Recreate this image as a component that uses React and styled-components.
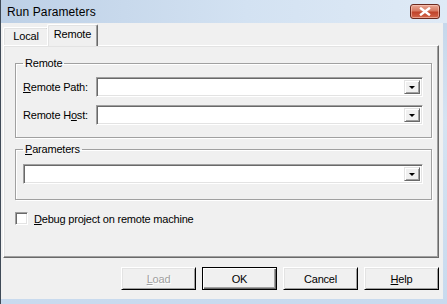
import React from 'react';
import styled, { createGlobalStyle } from 'styled-components';

const GlobalStyle = createGlobalStyle`
  html, body {
    margin: 0;
    padding: 0;
    background: #c9dbee;
  }
  body {
    font-family: "Liberation Sans", Arial, sans-serif;
    font-size: 11px;
    letter-spacing: -0.2px;
    color: #000;
  }
`;

const Window = styled.div`
  width: 447px;
  height: 304px;
  box-sizing: border-box;
  display: flex;
  flex-direction: column;
  border-left: 1px solid #3f4a57;
  background: linear-gradient(180deg, #c3d5ea 0%, #d5e3f2 40%, #c8daee 100%);
`;

const TitleBar = styled.div`
  height: 23px;
  flex: none;
  display: flex;
  align-items: center;
  justify-content: space-between;
  padding: 0 6px 0 6px;
  background: linear-gradient(90deg, #bdd0e6 0%, #d3e2f2 55%, #dfeaf6 100%);
`;

const Title = styled.span`
  font-size: 12px;
  letter-spacing: 0.1px;
  color: #000;
`;

const CloseButton = styled.div`
  width: 30px;
  height: 15px;
  margin-top: -1px;
  margin-right: 1px;
  box-sizing: border-box;
  border: 1px solid #6b2a1e;
  border-radius: 3px;
  display: flex;
  align-items: center;
  justify-content: center;
  background: linear-gradient(180deg, #e9a794 0%, #d77a62 45%, #c0432a 55%, #d3684c 100%);
  box-shadow: inset 0 0 0 1px rgba(255, 210, 195, 0.55);
`;

const Body = styled.div`
  flex: 1;
  display: flex;
  flex-direction: column;
  background: #f0f0f0;
  margin: 0 4px 5px 0;
  padding: 1px 0 0 2px;
`;

const TabRow = styled.div`
  height: 21px;
  display: flex;
  align-items: flex-start;
  flex: none;
`;

const Tab = styled.div`
  position: relative;
  box-sizing: border-box;
  display: flex;
  align-items: center;
  justify-content: center;
  background: #f0f0f0;
  border-top: 1px solid #fff;
  border-left: 1px solid #fff;
  border-right: 1px solid #696969;
  box-shadow: inset -1px 0 0 #a0a0a0, inset 1px 1px 0 #e3e3e3;
  border-radius: 2px 2px 0 0;
  margin-top: ${p => (p.$selected ? '0' : '3px')};
  height: ${p => (p.$selected ? '22px' : '18px')};
  width: ${p => p.$width};
  padding-bottom: ${p => (p.$selected ? '3px' : '1px')};
  margin-left: ${p => (p.$selected ? '-2px' : '0')};
  z-index: ${p => (p.$selected ? 1 : 0)};
`;

const Panel = styled.div`
  flex: 1;
  box-sizing: border-box;
  display: flex;
  flex-direction: column;
  width: 436px;
  border: 1px solid;
  border-color: #fff #696969 #696969 #fff;
  box-shadow: inset -1px -1px 0 #a0a0a0, inset 1px 1px 0 #e3e3e3;
  padding: 0 6px 0 11px;
`;

const Group = styled.fieldset`
  margin: ${p => p.$top} 0 0 0;
  padding: ${p => p.$pad};
  border: 1px solid #a0a0a0;
  box-shadow: inset 1px 1px 0 #fff, 1px 1px 0 #fff;
  min-width: 0;
`;

const Legend = styled.legend`
  padding: 0 2px;
  line-height: 13px;
  font-size: 11px;
`;

const FieldGrid = styled.div`
  display: grid;
  grid-template-columns: 73px 1fr;
  row-gap: 8px;
  align-items: center;
`;

const Label = styled.span`
  white-space: nowrap;
`;

const Combo = styled.div`
  height: 20px;
  box-sizing: border-box;
  display: flex;
  justify-content: flex-end;
  padding: 2px;
  background: #fff;
  border: 1px solid;
  border-color: #a0a0a0 #fff #fff #a0a0a0;
  box-shadow: inset 1px 1px 0 #696969, inset -1px -1px 0 #e3e3e3;
`;

const DropButton = styled.div`
  width: 16px;
  box-sizing: border-box;
  display: flex;
  align-items: center;
  justify-content: center;
  background: #f0f0f0;
  border: 1px solid;
  border-color: #e3e3e3 #696969 #696969 #e3e3e3;
  box-shadow: inset 1px 1px 0 #fff, inset -1px -1px 0 #a0a0a0;
`;

const Arrow = styled.div`
  width: 0;
  height: 0;
  border-left: 3px solid transparent;
  border-right: 3px solid transparent;
  border-top: 3px solid #000;
  margin-top: 1px;
`;

const CheckRow = styled.label`
  display: flex;
  align-items: center;
  gap: 6px;
  margin-top: 12px;
`;

const CheckBox = styled.span`
  width: 13px;
  height: 13px;
  box-sizing: border-box;
  background: #fff;
  border: 1px solid;
  border-color: #a0a0a0 #fff #fff #a0a0a0;
  box-shadow: inset 1px 1px 0 #696969, inset -1px -1px 0 #e3e3e3;
`;

const ButtonRow = styled.div`
  flex: none;
  display: flex;
  justify-content: flex-end;
  gap: 6px;
  margin: 9px 4px 9px 0;
`;

const Button = styled.button`
  width: 75px;
  height: 23px;
  box-sizing: border-box;
  padding: 0;
  font-family: "Liberation Sans", Arial, sans-serif;
  font-size: 11px;
  letter-spacing: -0.2px;
  background: #f0f0f0;
  color: ${p => (p.disabled ? '#a0a0a0' : '#000')};
  text-shadow: ${p => (p.disabled ? '1px 1px 0 #fff' : 'none')};
  border: 1px solid;
  border-color: ${p => (p.$default ? '#000' : '#fff #000 #000 #fff')};
  box-shadow: ${p =>
    p.$default
      ? 'inset 1px 1px 0 #fff, inset -1px -1px 0 #696969, inset -2px -2px 0 #a0a0a0'
      : 'inset 1px 1px 0 #e3e3e3, inset -1px -1px 0 #a0a0a0'};
`;

const Combobox = () => (
  <Combo>
    <DropButton>
      <Arrow />
    </DropButton>
  </Combo>
);

export default function App() {
  return (
    <>
      <GlobalStyle />
      <Window>
        <TitleBar>
          <Title>Run Parameters</Title>
          <CloseButton>
            <svg width="12" height="9" viewBox="0 0 12 9">
              <path
                d="M2 1.5 L10 7.5 M10 1.5 L2 7.5"
                stroke="#fff"
                strokeWidth="2.4"
                strokeLinecap="square"
              />
            </svg>
          </CloseButton>
        </TitleBar>
        <Body>
          <TabRow>
            <Tab $width="46px">Local</Tab>
            <Tab $selected $width="51px">Remote</Tab>
          </TabRow>
          <Panel>
            <Group $top="11px" $pad="7px 8px 12px 7px">
              <Legend>Remote</Legend>
              <FieldGrid>
                <Label><u>R</u>emote Path:</Label>
                <Combobox />
                <Label>Remote H<u>o</u>st:</Label>
                <Combobox />
              </FieldGrid>
            </Group>
            <Group $top="5px" $pad="8px 8px 15px 7px">
              <Legend><u>P</u>arameters</Legend>
              <Combobox />
            </Group>
            <CheckRow>
              <CheckBox />
              <span><u>D</u>ebug project on remote machine</span>
            </CheckRow>
          </Panel>
          <ButtonRow>
            <Button disabled><u>L</u>oad</Button>
            <Button $default>OK</Button>
            <Button>Cancel</Button>
            <Button><u>H</u>elp</Button>
          </ButtonRow>
        </Body>
      </Window>
    </>
  );
}
